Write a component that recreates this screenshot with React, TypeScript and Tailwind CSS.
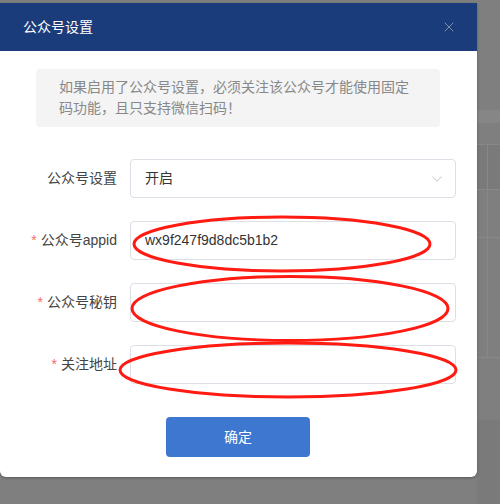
import { ChevronDown, X } from "lucide-react";

const fields = [
  { label: "公众号appid", value: "wx9f247f9d8dc5b1b2" },
  { label: "公众号秘钥", value: "" },
  { label: "关注地址", value: "" },
];

export default function App() {
  return (
    <div className="w-[500px] h-[504px] bg-[#7f7f7f] flex font-['Liberation_Sans','Noto_Sans_CJK_SC',sans-serif] text-[14px]">
      {/* Dialog */}
      <div className="w-[477px] pt-[3px] flex flex-col">
        <div className="relative h-[474px] bg-white rounded-b-[6px] shadow-[0_1px_3px_rgba(0,0,0,0.3)] flex flex-col">
          <div className="h-[48px] bg-[#1b3c7b] flex items-center justify-between pl-[23px] pr-[20px]">
            <span className="text-white text-[14px]">公众号设置</span>
            <X size={16} strokeWidth={1.2} className="text-[#9aa3b5]" />
          </div>

          <div className="mt-[18px] ml-[36px] w-[404px] h-[58px] bg-[#f4f4f4] rounded-[4px] pl-[23px] pt-[8px]">
            <p className="w-[352px] text-[#888] leading-[21px]">
              如果启用了公众号设置，必须关注该公众号才能使用固定码功能，且只支持微信扫码！
            </p>
          </div>

          <div className="mt-[32px] flex flex-col gap-[23px]">
            <div className="flex items-center">
              <span className="w-[117px] text-right text-[#444]">公众号设置</span>
              <div className="ml-[13px] w-[326px] h-[39px] border border-[#dcdfe6] rounded-[4px] flex items-center justify-between pl-[14px] pr-[9px] text-[#333]">
                <span>开启</span>
                <ChevronDown size={18} strokeWidth={1.1} className="text-[#b4b8c2]" />
              </div>
            </div>
            {fields.map((f) => (
              <div key={f.label} className="flex items-center">
                <span className="w-[117px] text-right text-[#444]">
                  <span className="text-[#f56c6c] mr-[4px]">*</span>
                  {f.label}
                </span>
                <div className="ml-[13px] w-[326px] h-[39px] border border-[#dcdfe6] rounded-[4px] flex items-center pl-[14px] text-[#333]">
                  {f.value}
                </div>
              </div>
            ))}
          </div>

          <div className="mt-[33px] flex">
            <button className="ml-[166px] w-[144px] h-[40px] bg-[#3d77cf] rounded-[4px] text-white">
              确定
            </button>
          </div>

          {/* hand-drawn annotations */}
          <svg className="absolute left-0 top-[-3px] pointer-events-none" width="477" height="504">
            <ellipse cx="282" cy="244" rx="148" ry="27" fill="none" stroke="#ff1a12" strokeWidth="3" />
            <ellipse cx="290" cy="308.5" rx="158" ry="32" fill="none" stroke="#ff1a12" strokeWidth="3" />
            <ellipse cx="288" cy="370" rx="168" ry="27" fill="none" stroke="#ff1a12" strokeWidth="3" />
          </svg>
        </div>
      </div>

      {/* Page behind the mask */}
      <div className="flex-1 flex flex-col">
        <div className="h-[110px]" />
        <div className="h-[13px] bg-[#868686]" />
        <div className="h-[22px] border-b border-[#888]" />
        <div className="h-[45px] bg-[#7a7a7a] border-b border-[#888] flex">
          <div className="w-[11px] border-r border-[#888]" />
        </div>
        <div className="h-[48px] border-b border-[#888] flex">
          <div className="w-[11px] border-r border-[#888]" />
        </div>
        <div className="h-[120px] border-b border-[#888] flex">
          <div className="w-[11px] border-r border-[#888]" />
        </div>
        <div className="h-[62px]" />
        <div className="flex-1 bg-[#7a7a7a]" />
      </div>
    </div>
  );
}
